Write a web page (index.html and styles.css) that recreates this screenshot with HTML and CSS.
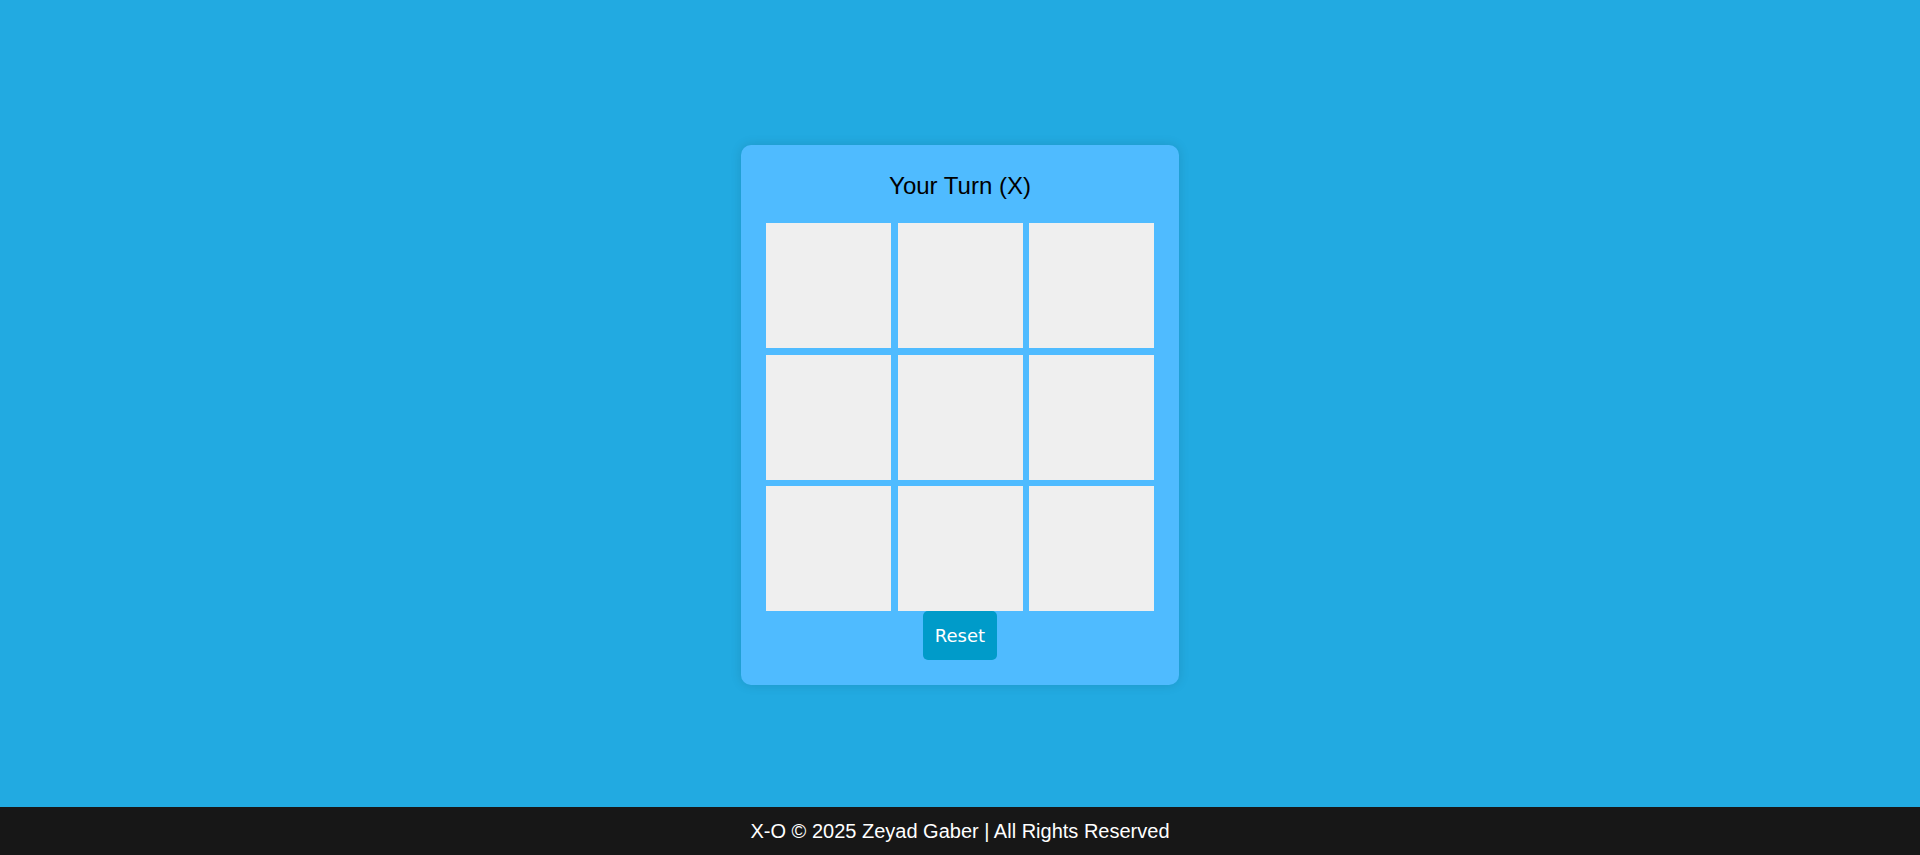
FILE: index.html
```html
<!DOCTYPE html>
<html lang="en">
<head>
<meta charset="utf-8">
<title>X-O</title>
<link rel="stylesheet" href="styles.css">
</head>
<body>
<main class="main">
  <div class="card">
    <h2 class="status">Your Turn (X)</h2>
    <div class="board">
      <div class="cell"></div><div class="cell"></div><div class="cell"></div>
      <div class="cell"></div><div class="cell"></div><div class="cell"></div>
      <div class="cell"></div><div class="cell"></div><div class="cell"></div>
    </div>
    <button class="reset">Reset</button>
  </div>
</main>
<footer class="footer">X-O © 2025 Zeyad Gaber | All Rights Reserved</footer>
</body>
</html>
```

FILE: styles.css
```css
html, body {
  margin: 0;
  padding: 0;
}
body {
  background: #22aae1;
  font-family: "Liberation Sans", Arial, sans-serif;
  min-height: 100vh;
  display: flex;
  flex-direction: column;
}
.main {
  flex: 1;
  display: flex;
  align-items: center;
  justify-content: center;
  padding-top: 23px;
}
.card {
  width: 438px;
  box-sizing: border-box;
  padding: 27px 25px 25px;
  background: #4fbbff;
  border-radius: 10px;
  box-shadow: 0 0 12px rgba(0, 0, 0, 0.12);
  display: flex;
  flex-direction: column;
  align-items: center;
}
.status {
  margin: 0 0 23px;
  font-size: 24px;
  font-weight: normal;
  color: #000;
  line-height: 28px;
}
.board {
  display: grid;
  grid-template-columns: repeat(3, 125px);
  grid-auto-rows: 125px;
  column-gap: 6.5px;
  row-gap: 6.5px;
  width: 388px;
}
.cell {
  background: #efefef;
}
.reset {
  margin: 0;
  border: none;
  border-radius: 5px;
  background: #009bc9;
  color: #fff;
  font-family: Tahoma, "DejaVu Sans", sans-serif;
  font-size: 18px;
  width: 74px;
  height: 49px;
  padding: 0;
  cursor: pointer;
}
.footer {
  height: 48px;
  background: #171717;
  color: #fff;
  font-size: 20px;
  display: flex;
  align-items: center;
  justify-content: center;
}
```
